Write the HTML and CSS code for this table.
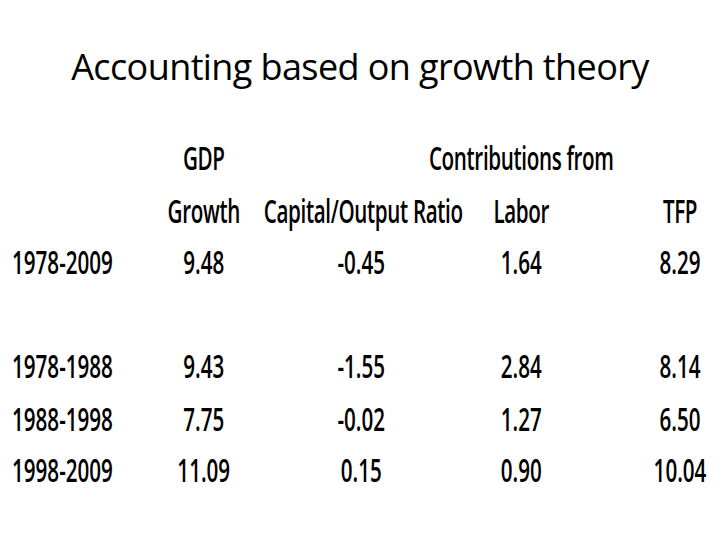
FILE: index.html
```html
<!DOCTYPE html>
<html>
<head>
<meta charset="utf-8">
<link rel="stylesheet" href="styles.css">
</head>
<body>
<h1 class="title">Accounting based on growth theory</h1>
<div class="table-wrap">
  <div class="grid">
    <div class="cell year"></div>
    <div class="cell c2 head">GDP</div>
    <div class="cell contrib head">Contributions from</div>

    <div class="cell year"></div>
    <div class="cell c2 head">Growth</div>
    <div class="cell c3 head">Capital/Output Ratio</div>
    <div class="cell c4 head">Labor</div>
    <div class="cell c5 head">TFP</div>

    <div class="cell year">1978-2009</div>
    <div class="cell c2">9.48</div>
    <div class="cell c3">-0.45</div>
    <div class="cell c4">1.64</div>
    <div class="cell c5">8.29</div>

    <div class="cell spacer"></div>

    <div class="cell year">1978-1988</div>
    <div class="cell c2">9.43</div>
    <div class="cell c3">-1.55</div>
    <div class="cell c4">2.84</div>
    <div class="cell c5">8.14</div>

    <div class="cell year">1988-1998</div>
    <div class="cell c2">7.75</div>
    <div class="cell c3">-0.02</div>
    <div class="cell c4">1.27</div>
    <div class="cell c5">6.50</div>

    <div class="cell year">1998-2009</div>
    <div class="cell c2">11.09</div>
    <div class="cell c3">0.15</div>
    <div class="cell c4">0.90</div>
    <div class="cell c5">10.04</div>
  </div>
</div>
</body>
</html>
```

FILE: styles.css
```css
html, body {
  margin: 0;
  padding: 0;
  background: #ffffff;
  overflow: hidden;
}
body {
  width: 720px;
  height: 540px;
  color: #000000;
  font-family: "Open Sans", "Noto Sans", sans-serif;
}
.title {
  margin: 41px 0 0 0;
  font-size: 36px;
  font-weight: 400;
  line-height: 52px;
  letter-spacing: -0.6px;
  text-align: center;
  white-space: nowrap;
}
.table-wrap {
  margin-top: 39px;
  width: 720px;
  transform: scaleY(1.6);
  transform-origin: 0 0;
}
.grid {
  display: grid;
  grid-template-columns: 143.75px 120px 195px 181.25px 80px;
  grid-auto-rows: 32.5px;
  font-size: 20.625px;
  font-weight: 600;
  line-height: 32.5px;
  white-space: nowrap;
}
.cell {
  text-align: center;
}
.head {
  letter-spacing: -0.35px;
}
.year {
  text-align: left;
  padding-left: 12px;
}
.c4 {
  padding-right: 56.25px;
}
.contrib {
  grid-column: 3 / 6;
  padding-left: 58.75px;
}
.spacer {
  grid-column: 1 / 6;
}
```
